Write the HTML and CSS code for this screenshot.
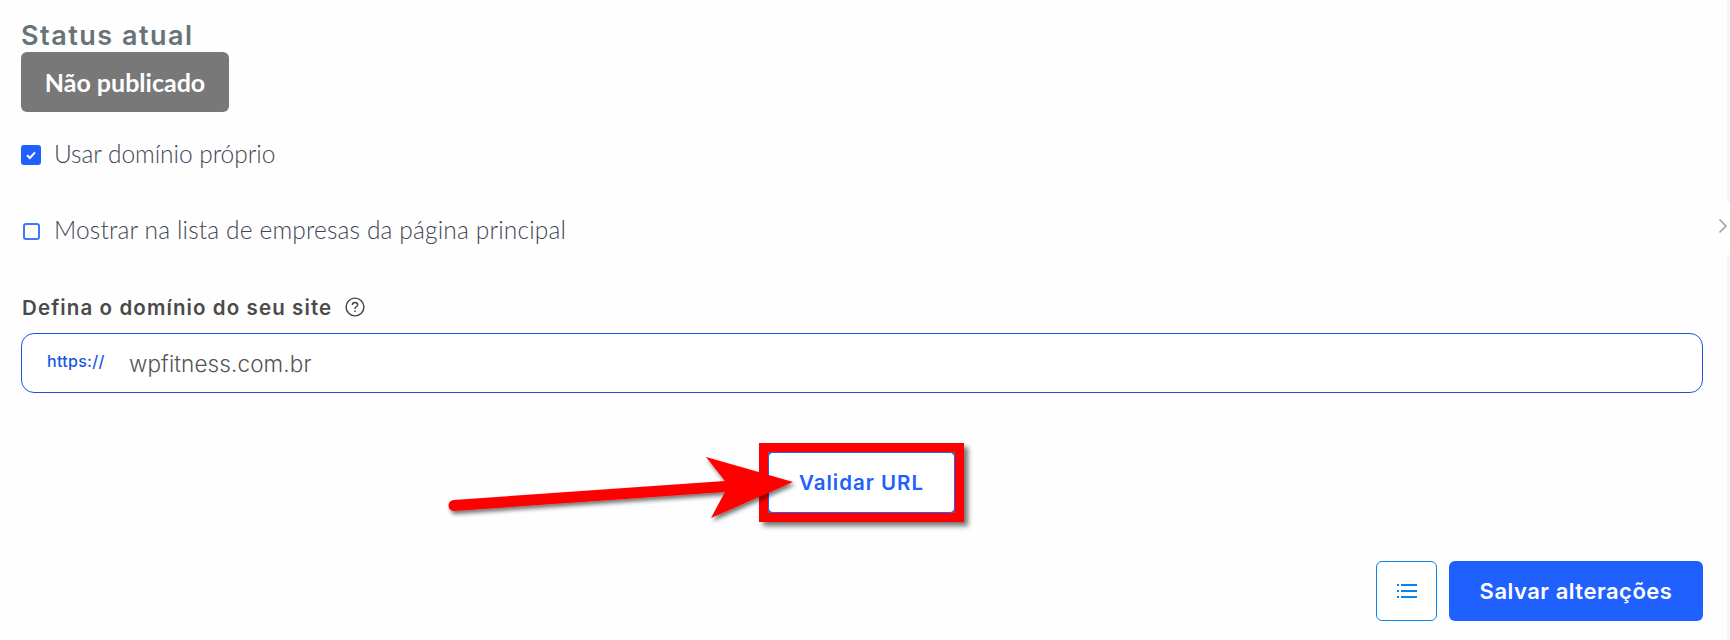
FILE: index.html
```html
<!DOCTYPE html>
<html lang="pt-BR">
<head>
  <meta charset="UTF-8">
  <title>Domínio do site</title>
  <link rel="stylesheet" href="styles.css">
</head>
<body>
  <div class="page">
    <h2 class="status-title">Status atual</h2>
    <div class="status-badge">Não publicado</div>

    <label class="check-row check-own">
      <span class="box box-on">
        <svg width="14" height="14" viewBox="0 0 14 14"><path d="M3 7.2 5.9 10 11 4.4" fill="none" stroke="#fff" stroke-width="2"/></svg>
      </span>
      <span class="check-text">Usar domínio próprio</span>
    </label>
    <label class="check-row check-list">
      <span class="box box-off"></span>
      <span class="check-text">Mostrar na lista de empresas da página principal</span>
    </label>

    <div class="field-label">
      Defina o domínio do seu site
      <svg width="20" height="20" viewBox="0 0 18 18" fill="none" stroke="#444" stroke-width="1.3">
        <circle cx="9" cy="9" r="8"/>
        <path d="M6.6 7.2c0-1.4 1.1-2.3 2.4-2.3s2.4.9 2.4 2.1c0 1.8-2.4 1.8-2.4 3.7"/>
        <path d="M9 12.2v1.3"/>
      </svg>
    </div>
    <div class="domain-input">
      <span class="prefix">https://</span>
      <span class="domain">wpfitness.com.br</span>
    </div>

    <div class="validate-row">
      <div class="highlight">
        <button class="validate-btn">Validar URL</button>
      </div>
    </div>

    <div class="actions">
      <button class="list-btn">
        <svg width="20" height="16" viewBox="0 0 20 16" fill="#0a84e8">
          <rect x="0" y="1" width="2" height="2"/><rect x="4" y="1" width="16" height="2"/>
          <rect x="0" y="7" width="2" height="2"/><rect x="4" y="7" width="16" height="2"/>
          <rect x="0" y="13" width="2" height="2"/><rect x="4" y="13" width="16" height="2"/>
        </svg>
      </button>
      <button class="save-btn">Salvar alterações</button>
    </div>
  </div>

  <!-- annotation arrow drawn over the screenshot -->
  <svg class="arrow" width="370" height="90" viewBox="0 0 370 90">
    <defs>
      <filter id="arrowShadow" x="-5%" y="-20%" width="110%" height="150%">
        <feDropShadow dx="2" dy="3" stdDeviation="2" flood-color="#000" flood-opacity="0.55"/>
      </filter>
    </defs>
    <path d="M19 55 290 36 271 12 358 37 276 73 290 47 19 66A5.5 5.5 0 0 1 19 55Z" fill="#ff0000" filter="url(#arrowShadow)"/>
  </svg>

  <!-- sidebar toggle on the right edge -->
  <div class="edge edge-top"></div>
  <div class="edge edge-bottom"></div>
  <svg class="edge-chevron" width="10" height="16" viewBox="0 0 10 16"><path d="M1.5 1.5 8 8 1.5 14.5" fill="none" stroke="#98a2b3" stroke-width="1.6"/></svg>
</body>
</html>
```

FILE: styles.css
```css
* {
  margin: 0;
  padding: 0;
  box-sizing: border-box;
}
html, body {
  height: 640px;
  overflow: hidden;
}
body {
  position: relative;
  background: #fefefe;
  font-family: "Lato", sans-serif;
}

.page {
  display: flex;
  flex-direction: column;
  align-items: flex-start;
  width: 1703px;
  padding: 20px 0 0 21px;
}

/* Status */
.status-title {
  height: 32px;
  font-family: "Inter", sans-serif;
  font-size: 27px;
  line-height: 32px;
  font-weight: 600;
  letter-spacing: 1.5px;
  color: #667479;
}
.status-badge {
  display: flex;
  align-items: center;
  justify-content: center;
  width: 208px;
  height: 60px;
  background: #787878;
  border-radius: 6px;
  font-size: 25px;
  font-weight: 700;
  color: #fff;
}

/* Checkboxes */
.check-row {
  display: flex;
  align-items: center;
  height: 24px;
  font-size: 24.5px;
  font-weight: 300;
  color: #3f4652;
}
.check-text {
  margin-bottom: 3px;
}
.check-own {
  margin-top: 31px;
  letter-spacing: -0.05px;
}
.check-list {
  margin-top: 52px;
  letter-spacing: 0.15px;
}
.box {
  display: flex;
  align-items: center;
  justify-content: center;
  flex-shrink: 0;
  border-radius: 3px;
}
.box-on {
  width: 20px;
  height: 20px;
  margin-right: 13px;
  background: #2060ff;
}
.box-off {
  width: 17px;
  height: 17px;
  margin: 0 14px 0 2px;
  border: 2px solid #3f77f8;
}

/* Domain field */
.field-label {
  display: flex;
  align-items: center;
  gap: 13px;
  height: 24px;
  margin-top: 52px;
  padding-left: 1px;
  font-family: "Inter", sans-serif;
  font-size: 20.5px;
  font-weight: 600;
  letter-spacing: 1.1px;
  color: #4a4a4a;
}
.domain-input {
  display: flex;
  align-items: center;
  width: 1682px;
  height: 60px;
  margin-top: 14px;
  padding-left: 25px;
  background: #fff;
  border: 1px solid #1a56db;
  border-radius: 13px;
}
.prefix {
  width: 82px;
  margin-bottom: 4px;
  font-family: "Inter", sans-serif;
  font-size: 16px;
  font-weight: 500;
  letter-spacing: 0.3px;
  color: #1a56e8;
}
.domain {
  font-family: "Inter", sans-serif;
  font-size: 22.5px;
  font-weight: 300;
  letter-spacing: 0.1px;
  color: #555;
}

/* Validate */
.validate-row {
  display: flex;
  margin: 50px 0 0 738px;
}
.highlight {
  background: #666;
  border: 9px solid #ff0000;
  box-shadow: 4px 4px 5px rgba(0, 0, 0, 0.55);
}
.validate-btn {
  display: block;
  width: 187px;
  height: 61px;
  background: #fff;
  border: 1px solid #2060ff;
  border-radius: 5px;
  font-family: "Inter", sans-serif;
  font-size: 20.5px;
  font-weight: 600;
  letter-spacing: 1px;
  color: #2060ff;
}

/* Bottom actions */
.actions {
  display: flex;
  gap: 12px;
  align-self: flex-end;
  margin-top: 39px;
}
.list-btn {
  display: flex;
  align-items: center;
  justify-content: center;
  width: 61px;
  height: 60px;
  background: #fff;
  border: 1px solid #0a84e8;
  border-radius: 6px;
}
.save-btn {
  width: 254px;
  height: 60px;
  background: #2060ff;
  border: none;
  border-radius: 6px;
  font-family: "Inter", sans-serif;
  font-size: 22px;
  font-weight: 600;
  letter-spacing: 0.5px;
  color: #fff;
}

/* Overlays */
.arrow {
  position: absolute;
  left: 435px;
  top: 445px;
}
.edge {
  position: absolute;
  right: 0;
  width: 3px;
  background: #f2f4f8;
}
.edge-top {
  top: 0;
  height: 202px;
}
.edge-bottom {
  top: 255px;
  bottom: 0;
}
.edge-chevron {
  position: absolute;
  left: 1718px;
  top: 218px;
}
```
